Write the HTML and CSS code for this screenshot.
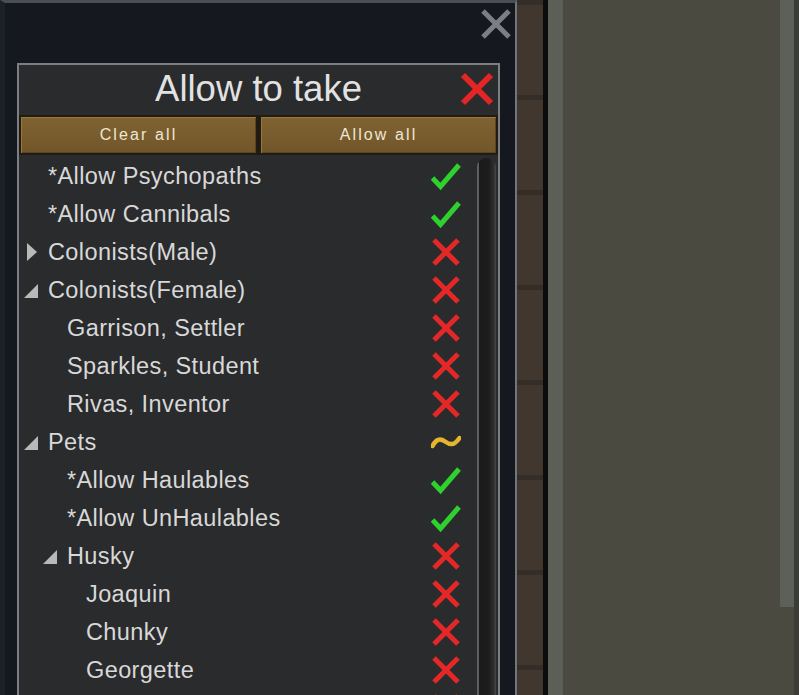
FILE: index.html
```html
<!DOCTYPE html>
<html>
<head>
<meta charset="utf-8">
<link rel="stylesheet" href="styles.css">
</head>
<body>
<div class="screen">
  <div class="window">
    <div class="win-head">
      <svg class="close" viewBox="0 0 32 32" width="32" height="32"><path d="M3 3 L29 29 M29 3 L3 29" stroke="#7b7e82" stroke-width="5" fill="none"/></svg>
    </div>
    <div class="panel">
      <div class="title-row">
        <span></span>
        <h1 class="title">Allow to take</h1>
        <svg class="title-x" viewBox="0 0 34 34" width="34" height="34"><path d="M3 3 L31 31 M31 3 L3 31" stroke="#e42525" stroke-width="6" fill="none"/></svg>
      </div>
      <div class="buttons">
        <button class="btn">Clear all</button>
        <button class="btn">Allow all</button>
      </div>
      <div class="list-wrap">
        <ul class="list">
          <li class="row l0"><span class="slot"></span><span class="label">*Allow Psychopaths</span><span class="ic ok"></span></li>
          <li class="row l0"><span class="slot"></span><span class="label">*Allow Cannibals</span><span class="ic ok"></span></li>
          <li class="row l0"><span class="slot"><svg class="tri-r" viewBox="0 0 10 18" width="10" height="18"><polygon points="0,0 10,9 0,18" fill="#b9b9b9"/></svg></span><span class="label">Colonists(Male)</span><span class="ic no"></span></li>
          <li class="row l0"><span class="slot"><svg class="tri-d" viewBox="0 0 14 14" width="14" height="14"><polygon points="14,0 14,14 0,14" fill="#b9b9b9"/></svg></span><span class="label">Colonists(Female)</span><span class="ic no"></span></li>
          <li class="row l1"><span class="slot"></span><span class="label">Garrison, Settler</span><span class="ic no"></span></li>
          <li class="row l1"><span class="slot"></span><span class="label">Sparkles, Student</span><span class="ic no"></span></li>
          <li class="row l1"><span class="slot"></span><span class="label">Rivas, Inventor</span><span class="ic no"></span></li>
          <li class="row l0"><span class="slot"><svg class="tri-d" viewBox="0 0 14 14" width="14" height="14"><polygon points="14,0 14,14 0,14" fill="#b9b9b9"/></svg></span><span class="label">Pets</span><span class="ic some"></span></li>
          <li class="row l1"><span class="slot"></span><span class="label">*Allow Haulables</span><span class="ic ok"></span></li>
          <li class="row l1"><span class="slot"></span><span class="label">*Allow UnHaulables</span><span class="ic ok"></span></li>
          <li class="row l1"><span class="slot"><svg class="tri-d" viewBox="0 0 14 14" width="14" height="14"><polygon points="14,0 14,14 0,14" fill="#b9b9b9"/></svg></span><span class="label">Husky</span><span class="ic no"></span></li>
          <li class="row l2"><span class="slot"></span><span class="label">Joaquin</span><span class="ic no"></span></li>
          <li class="row l2"><span class="slot"></span><span class="label">Chunky</span><span class="ic no"></span></li>
          <li class="row l2"><span class="slot"></span><span class="label">Georgette</span><span class="ic no"></span></li>
          <li class="row l2"><span class="slot"></span><span class="label"></span><span class="ic no"></span></li>
        </ul>
        <div class="scroll"><div class="thumb"></div></div>
      </div>
    </div>
  </div>
  <div class="brown"></div>
  <div class="blackline"></div>
  <div class="map">
    <div class="map-edge"></div>
    <div class="map-main"></div>
    <div class="map-right"><div class="map-strip"></div></div>
    <div class="map-far"></div>
  </div>
</div>
</body>
</html>
```

FILE: styles.css
```css
* { box-sizing: border-box; }
html, body { margin: 0; padding: 0; }
body {
  width: 799px;
  height: 695px;
  overflow: hidden;
  background: #14171d;
  font-family: "Liberation Sans", Arial, sans-serif;
}
.screen {
  display: flex;
  width: 799px;
  height: 695px;
  overflow: hidden;
}
.window {
  width: 517px;
  flex: none;
  display: flex;
  flex-direction: column;
  background: #15181e;
  border-top: 3px solid #4a4e54;
  border-left: 5px solid #1b2029;
  border-right: 2px solid #71767c;
}
.win-head {
  height: 60px;
  flex: none;
  display: flex;
  justify-content: flex-end;
  align-items: flex-start;
  padding-top: 5px;
  padding-right: 3px;
}
.close { display: block; }
.panel {
  flex: 1;
  margin-left: 12px;
  margin-right: 15px;
  background: #2a2b2d;
  border: 2px solid #7c7e81;
  border-bottom: none;
  display: flex;
  flex-direction: column;
  min-height: 0;
}
.title-row {
  height: 48px;
  flex: none;
  display: grid;
  grid-template-columns: 1fr auto 1fr;
  align-items: center;
}
.title {
  margin: 0;
  font-weight: normal;
  font-size: 36.5px;
  line-height: 48px;
  color: #e2e2e2;
}
.title-x {
  justify-self: end;
  margin-right: 4px;
  display: block;
}
.buttons {
  margin-top: 2px;
  height: 40px;
  flex: none;
  display: flex;
  gap: 1px;
  background: #1d1913;
}
.btn {
  flex: 1;
  margin: 0;
  padding: 0;
  border: 2px solid #211b13;
  background: linear-gradient(#806331, #71562a);
  box-shadow: inset 1px 1px 0 #98783f, inset -1px -1px 0 #5a4522;
  color: #efe6d4;
  font-family: "Liberation Sans", Arial, sans-serif;
  font-size: 16px;
  letter-spacing: 2.1px;
}
.list-wrap {
  flex: 1;
  display: flex;
  margin-top: 2px;
  min-height: 0;
}
.list {
  list-style: none;
  margin: 0;
  padding: 0;
  width: 457px;
  flex: none;
}
.row {
  height: 38px;
  display: flex;
  align-items: center;
  font-size: 23.5px;
  letter-spacing: 0.4px;
  color: #d8d8d8;
  padding-left: 6px;
}
.row.l1 { padding-left: 25px; }
.row.l2 { padding-left: 44px; }
.slot {
  width: 23px;
  flex: none;
  display: flex;
  align-items: center;
}
.tri-r { display: block; margin-left: 2px; }
.tri-d { display: block; margin-left: -1px; transform: translateY(1px); }
.label {
  flex: 1;
  white-space: nowrap;
}
.ic {
  width: 30px;
  height: 30px;
  flex: none;
  margin-right: 15px;
  background-repeat: no-repeat;
  background-size: 30px 30px;
}
.ic.ok {
  background-image: url("data:image/svg+xml;utf8,<svg xmlns='http://www.w3.org/2000/svg' viewBox='0 0 30 30'><polyline points='1.5,17 9.5,25.5 28,4' fill='none' stroke='%232fd12f' stroke-width='5'/></svg>");
}
.ic.no {
  background-image: url("data:image/svg+xml;utf8,<svg xmlns='http://www.w3.org/2000/svg' viewBox='0 0 30 30'><path d='M3 3 L27 27 M27 3 L3 27' fill='none' stroke='%23e42828' stroke-width='5'/></svg>");
}
.ic.some {
  background-image: url("data:image/svg+xml;utf8,<svg xmlns='http://www.w3.org/2000/svg' viewBox='0 0 30 30'><path d='M1.5 19 C5 12 9 11 14 14.5 S 23 19 28.5 11' fill='none' stroke='%23e6b530' stroke-width='4.5' stroke-linecap='round'/></svg>");
}
.scroll {
  width: 22px;
  flex: none;
  padding-top: 1px;
  padding-left: 1px;
  padding-right: 2px;
  display: flex;
}
.thumb {
  flex: 1;
  border-radius: 9px 9px 0 0;
  background: linear-gradient(90deg, #5f5f5f 0, #5f5f5f 2px, #1a1a1a 2px, #1c1c1c 60%, #2e2e2e 88%, #4a4a4a 100%);
}
.brown {
  width: 26px;
  flex: none;
  background: repeating-linear-gradient(180deg, #342c26 0, #342c26 5px, #41372f 5px, #41372f 95px);
}
.blackline {
  width: 5px;
  flex: none;
  background: #0c0c0c;
}
.map {
  flex: 1;
  display: flex;
  background: #4a4a40;
}
.map-edge {
  width: 15px;
  flex: none;
  background: #5b5f55;
}
.map-main { flex: 1; }
.map-right {
  width: 14px;
  flex: none;
}
.map-strip {
  height: 607px;
  background: #5c6056;
}
.map-far {
  width: 5px;
  flex: none;
  background: #3b3c35;
}
```
